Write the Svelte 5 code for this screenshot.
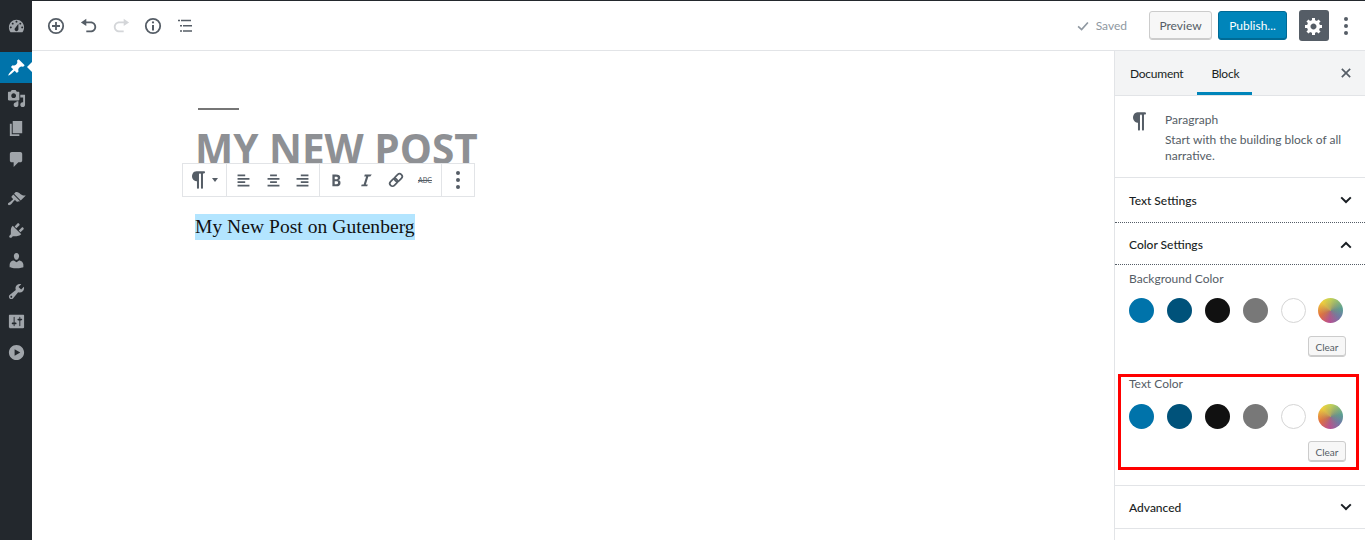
<script>
  const adminTop = [
    { d: 'M13 11V4c0-.55-.45-1-1-1h-1.67L9 1H5L3.67 3H2c-.55 0-1 .45-1 1v7c0 .55.45 1 1 1h10c.55 0 1-.45 1-1zM7 4.5c1.38 0 2.5 1.12 2.5 2.5S8.38 9.5 7 9.5 4.5 8.38 4.5 7 5.62 4.5 7 4.5zM14 6h5v10.5c0 1.38-1.12 2.5-2.5 2.5S14 17.88 14 16.5s1.12-2.5 2.5-2.5c.17 0 .34.02.5.05V9h-3V6zm-4 8.05V13h2v3.5c0 1.38-1.12 2.5-2.5 2.5S7 17.88 7 16.5 8.12 14 9.5 14c.17 0 .34.02.5.05z' },
    { d: 'M6 15V2h10v13H6zm-1 1h8v2H3V5h2v11z' },
    { d: 'M5 2h9c1.1 0 2 .9 2 2v7c0 1.1-.9 2-2 2h-2l-5 5v-5H5c-1.1 0-2-.9-2-2V4c0-1.1.9-2 2-2z' }
  ];
  const adminBottom = [
    { d: 'M14.48 11.06L7.41 3.99l1.5-1.5c.5-.56 2.3-.47 3.51.32 1.21.8 1.43 1.28 2.91 2.1 1.18.64 2.45 1.26 4.45.85zm-.71.71L6.7 4.7 4.93 6.47c-.39.39-.39 1.02 0 1.41l1.06 1.06c.39.39.39 1.03 0 1.42-.6.6-1.43 1.11-2.21 1.69-.35.26-.7.53-1.01.84C1.43 13.23.4 14.75 1.3 15.65c.9.9 2.42-.13 3.76-1.47.31-.31.58-.66.84-1.01.58-.78 1.09-1.61 1.69-2.21.39-.39 1.03-.39 1.42 0l1.06 1.06c.39.39 1.02.39 1.41 0z' },
    { d: 'M13.11 4.36L9.87 7.6 8 5.73l3.24-3.24c.35-.34 1.05-.2 1.56.32.52.51.66 1.21.31 1.55zm-8 1.77l.91-1.12 9.01 9.01-1.19.84c-.71.71-2.63 1.16-3.82 1.16H6.14L4.9 17.26c-.59.59-1.54.59-2.12 0-.59-.58-.59-1.53 0-2.12l1.24-1.24v-3.88c0-1.13.4-3.19 1.09-3.89zm7.26 3.97l3.24-3.24c.34-.35 1.04-.21 1.55.31.52.51.66 1.21.31 1.55l-3.24 3.25z' },
    { d: 'M10 9.25c-2.27 0-2.73-3.44-2.73-3.44C7 4.02 7.82 2 9.97 2c2.16 0 2.98 2.02 2.71 3.81 0 0-.41 3.44-2.68 3.44zm0 2.57L12.72 10c2.39 0 4.52 2.33 4.52 4.53v2.49s-3.65 1.13-7.24 1.13c-3.65 0-7.24-1.13-7.24-1.13v-2.49c0-2.25 1.94-4.48 4.47-4.48z' },
    { d: 'M16.68 9.77c-1.34 1.34-3.3 1.67-4.95.99l-5.41 6.52c-.99.99-2.59.99-3.58 0s-.99-2.59 0-3.57l6.52-5.42c-.68-1.65-.35-3.61.99-4.95 1.28-1.28 3.12-1.62 4.72-1.06l-2.89 2.89 2.82 2.82 2.86-2.87c.53 1.58.18 3.39-1.08 4.67zM3.81 16.21c.4.39 1.04.39 1.43 0 .4-.4.4-1.04 0-1.43-.39-.4-1.03-.4-1.43 0-.39.39-.39 1.03 0 1.43z' },
    { d: 'M18 16V4c0-.55-.45-1-1-1H3c-.55 0-1 .45-1 1v12c0 .55.45 1 1 1h14c.55 0 1-.45 1-1zM8 11h1c.55 0 1 .45 1 1s-.45 1-1 1H8v1.5c0 .28-.22.5-.5.5s-.5-.22-.5-.5V13H6c-.55 0-1-.45-1-1s.45-1 1-1h1V5.5c0-.28.22-.5.5-.5s.5.22.5.5V11zm5-2h-1c-.55 0-1-.45-1-1s.45-1 1-1h1V5.5c0-.28.22-.5.5-.5s.5.22.5.5V7h1c.55 0 1 .45 1 1s-.45 1-1 1h-1v5.5c0 .28-.22.5-.5.5s-.5-.22-.5-.5V9z' },
    { d: 'M10 2c4.42 0 8 3.58 8 8s-3.58 8-8 8-8-3.58-8-8 3.58-8 8-8zm-2 11.5l6-3.5-6-3.5v7z' }
  ];
  const paragraphIcon = 'M15 2H7.54c-.83 0-1.59.2-2.28.6-.7.41-1.25.96-1.65 1.65C3.2 4.94 3 5.7 3 6.52c0 .82.2 1.58.61 2.27.4.69.95 1.24 1.65 1.64.69.41 1.45.61 2.28.61h.43V17c0 .27.1.51.29.71.2.19.44.29.71.29.28 0 .51-.1.71-.29.2-.2.3-.44.3-.71V5c0-.27.09-.51.29-.71.2-.19.44-.29.71-.29s.51.1.71.29c.19.2.29.44.29.71v12c0 .27.1.51.3.71.2.19.43.29.7.29.28 0 .51-.1.71-.29.2-.2.29-.44.29-.71V4H15c.27 0 .5-.1.7-.3.2-.19.3-.43.3-.7s-.1-.51-.3-.71C15.5 2.1 15.27 2 15 2z';
  const swatches = ['#0073aa', '#00527a', '#111111', '#787878', '#ffffff', 'gradient'];
</script>

{#snippet chevron(up)}
  <svg class="chev" viewBox="0 0 12 8" width="12" height="8">
    <path d={up ? 'M1.2 6.6 6 2l4.8 4.6' : 'M1.2 1.4 6 6l4.8-4.6'} fill="none" stroke="#191e23" stroke-width="2" />
  </svg>
{/snippet}

{#snippet palette(label)}
  <div class="label">{label}</div>
  <div class="swatches">
    {#each swatches as c}
      <span class="swatch" class:white={c === '#ffffff'} class:gradient={c === 'gradient'} style={c === 'gradient' ? '' : `background:${c}`}></span>
    {/each}
  </div>
  <div class="clear-row"><button class="clear">Clear</button></div>
{/snippet}

<div class="page">
  <nav class="adminbar">
    <div class="item first">
      <svg viewBox="0 0 20 20" width="19" height="19"><path fill="#a0a5aa" d="M3.76 16h12.48c1.1-1.37 1.76-3.11 1.76-5 0-4.42-3.58-8-8-8s-8 3.58-8 8c0 1.89.66 3.63 1.76 5zM10 4c.55 0 1 .45 1 1s-.45 1-1 1-1-.45-1-1 .45-1 1-1zM6 6c.55 0 1 .45 1 1s-.45 1-1 1-1-.45-1-1 .45-1 1-1zm8 0c.55 0 1 .45 1 1s-.45 1-1 1-1-.45-1-1 .45-1 1-1zm-5.37 5.55L12 7v6c0 1.1-.9 2-2 2s-2-.9-2-2c0-.57.24-1.08.63-1.45zM4 10c.55 0 1 .45 1 1s-.45 1-1 1-1-.45-1-1 .45-1 1-1zm12 0c.55 0 1 .45 1 1s-.45 1-1 1-1-.45-1-1 .45-1 1-1z" /></svg>
    </div>
    <div class="item active">
      <svg viewBox="0 0 20 20" width="19" height="19"><path fill="#fff" d="M10.44 3.02l1.82-1.82 6.36 6.35-1.83 1.82c-1.05-.68-2.48-.57-3.41.36l-.75.75c-.92.93-1.04 2.35-.35 3.41l-1.83 1.82-2.41-2.41-2.8 2.79c-.42.42-3.38 2.71-3.8 2.29s1.86-3.39 2.28-3.81l2.79-2.79L4.1 9.36l1.83-1.82c1.05.69 2.48.57 3.4-.36l.75-.75c.93-.92 1.05-2.35.36-3.41z" /></svg>
      <span class="arrow"></span>
    </div>
    {#each adminTop as icon}
      <div class="item"><svg viewBox="0 0 20 20" width="19" height="19"><path fill="#a0a5aa" d={icon.d} /></svg></div>
    {/each}
    <div class="menu-gap"></div>
    {#each adminBottom as icon}
      <div class="item"><svg viewBox="0 0 20 20" width="19" height="19"><path fill="#a0a5aa" d={icon.d} /></svg></div>
    {/each}
  </nav>

  <div class="main">
    <header class="topbar">
      <div class="tools">
        <button class="tool" aria-label="Add block">
          <svg viewBox="0 0 18 18" width="18" height="18"><circle cx="9" cy="9" r="7.2" fill="none" stroke="#555d66" stroke-width="1.8" /><path d="M9 5v8M5 9h8" stroke="#555d66" stroke-width="1.8" /></svg>
        </button>
        <button class="tool" aria-label="Undo">
          <svg viewBox="0 0 20 20" width="18" height="18"><path fill="#555d66" d="M12 5H7V2L1 6l6 4V7h5c2.2 0 4 1.8 4 4s-1.8 4-4 4H7v2h5c3.3 0 6-2.7 6-6s-2.7-6-6-6z" /></svg>
        </button>
        <button class="tool" aria-label="Redo">
          <svg viewBox="0 0 20 20" width="18" height="18"><path fill="#d4d6d9" d="M8 5h5V2l6 4-6 4V7H8c-2.2 0-4 1.8-4 4s1.8 4 4 4h5v2H8c-3.3 0-6-2.7-6-6s2.7-6 6-6z" /></svg>
        </button>
        <button class="tool" aria-label="Info">
          <svg viewBox="0 0 18 18" width="18" height="18"><circle cx="9" cy="9" r="7.2" fill="none" stroke="#555d66" stroke-width="1.8" /><path d="M9 8v5.5" stroke="#555d66" stroke-width="2" /><circle cx="9" cy="5.4" r="1.1" fill="#555d66" /></svg>
        </button>
        <button class="tool" aria-label="Outline">
          <svg viewBox="0 0 18 18" width="18" height="18"><path d="M1 3.5h2M4 3.5h10M3 8.8h2M6 8.8h9M3 14h2M6 14h9" stroke="#555d66" stroke-width="1.4" /></svg>
        </button>
      </div>
      <div class="actions">
        <span class="saved">
          <svg viewBox="0 0 20 20" width="14" height="14"><path d="M3 10.5 8 15l9-10" fill="none" stroke="#8f98a1" stroke-width="2.4" /></svg>
          Saved
        </span>
        <button class="btn preview">Preview</button>
        <button class="btn publish">Publish...</button>
        <button class="gear" aria-label="Settings">
          <svg viewBox="0 0 20 20" width="20" height="20"><path fill="#fff" fill-rule="evenodd" d="M18 12h-2.18c-.17.7-.44 1.35-.81 1.93l1.54 1.54-2.1 2.1-1.54-1.54c-.58.36-1.23.63-1.91.79V19H8v-2.18c-.68-.16-1.33-.43-1.91-.79l-1.54 1.54-2.12-2.12 1.54-1.54c-.36-.58-.63-1.23-.79-1.91H1V9.03h2.17c.16-.7.44-1.35.8-1.94L2.43 5.55l2.1-2.1 1.54 1.54c.58-.37 1.24-.64 1.93-.81V2h3v2.18c.68.16 1.33.43 1.91.79l1.54-1.54 2.12 2.12-1.54 1.54c.36.59.64 1.24.8 1.94H18V12zm-8.5 1.5c1.66 0 3-1.34 3-3s-1.34-3-3-3-3 1.34-3 3 1.34 3 3 3z" /></svg>
        </button>
        <span class="kebab top"><i></i><i></i><i></i></span>
      </div>
    </header>

    <div class="workspace">
      <main class="editor">
        <div class="rule"></div>
        <h1 class="title">MY NEW POST</h1>
        <div class="block-toolbar">
          <div class="group g1">
            <svg viewBox="0 0 20 20" width="20" height="22" preserveAspectRatio="none"><path fill="#555d66" d={paragraphIcon} /></svg>
            <span class="caret"></span>
          </div>
          <div class="group g2">
            <svg viewBox="0 0 20 20" width="17" height="17"><path fill="#555d66" d="M12 5V3H3v2h9zm5 4V7H3v2h14zm-5 4v-2H3v2h9zm5 4v-2H3v2h14z" /></svg>
            <svg viewBox="0 0 20 20" width="17" height="17"><path fill="#555d66" d="M14 5V3H6v2h8zm3 4V7H3v2h14zm-3 4v-2H6v2h8zm3 4v-2H3v2h14z" /></svg>
            <svg viewBox="0 0 20 20" width="17" height="17"><path fill="#555d66" d="M17 5V3H8v2h9zm0 4V7H3v2h14zm0 4v-2H8v2h9zm0 4v-2H3v2h14z" /></svg>
          </div>
          <div class="group g3">
            <svg viewBox="0 0 20 20" width="18" height="18"><path fill="#555d66" fill-rule="evenodd" d="M6 4v13h4.54c1.37 0 2.46-.33 3.26-1 .8-.66 1.2-1.58 1.2-2.77 0-.84-.17-1.51-.51-2.01s-.9-.85-1.67-1.03v-.09c.57-.1 1.02-.4 1.36-.9s.51-1.13.51-1.91c0-1.14-.39-1.98-1.17-2.5C12.75 4.26 11.5 4 9.78 4H6zm2.57 5.15V6.26h1.36c.73 0 1.27.11 1.61.32.34.22.51.58.51 1.07 0 .54-.16.92-.47 1.15s-.82.35-1.51.35h-1.5zm0 2.19h1.6c1.44 0 2.16.53 2.16 1.61 0 .6-.17 1.05-.51 1.34s-.86.43-1.57.43H8.57v-3.38z" /></svg>
            <svg viewBox="0 0 20 20" width="18" height="18"><path fill="#555d66" d="M14.78 6h-2.13l-2.8 9h2.12l-.62 2H4.6l.62-2h2.14l2.8-9H8.03l.62-2h7.75z" /></svg>
            <svg viewBox="0 0 20 20" width="18" height="18"><g transform="rotate(-45 10 10)" fill="none" stroke="#555d66" stroke-width="1.9"><rect x="1.5" y="7" width="9.5" height="6" rx="3" /><rect x="9" y="7" width="9.5" height="6" rx="3" /></g></svg>
            <span class="abc">ABC</span>
          </div>
          <div class="group g4"><span class="kebab"><i></i><i></i><i></i></span></div>
        </div>
        <p class="body-text"><span>My New Post on Gutenberg</span></p>
      </main>

      <aside class="sidebar">
        <div class="tabs">
          <span class="tab">Document</span>
          <span class="tab on">Block</span>
          <svg class="close" viewBox="0 0 12 12" width="10" height="10"><path d="M1 1l10 10M11 1 1 11" stroke="#555d66" stroke-width="2" /></svg>
        </div>
        <div class="card">
          <svg viewBox="0 0 20 20" width="20" height="23" preserveAspectRatio="none"><path fill="#555d66" d={paragraphIcon} /></svg>
          <div>
            <div class="card-title">Paragraph</div>
            <div class="card-desc">Start with the building block of all narrative.</div>
          </div>
        </div>
        <div class="panel solid">Text Settings {@render chevron(false)}</div>
        <div class="panel dotted">Color Settings {@render chevron(true)}</div>
        <div class="colors">
          {@render palette('Background Color')}
          <div class="highlight">
            {@render palette('Text Color')}
          </div>
        </div>
        <div class="panel solid adv">Advanced {@render chevron(false)}</div>
      </aside>
    </div>
  </div>
</div>

<style>
  :global(body) {
    margin: 0;
    background: #fff;
  }

  .page {
    display: flex;
    width: 1365px;
    height: 540px;
    overflow: hidden;
    font-family: Lato, 'Open Sans', sans-serif;
    color: #191e23;
  }

  button {
    font-family: inherit;
    cursor: pointer;
  }

  .adminbar {
    width: 32px;
    flex: none;
    background: #23282d;
    padding-top: 11px;
    box-sizing: border-box;
  }

  .item {
    position: relative;
    height: 30.5px;
    display: flex;
    align-items: center;
    justify-content: center;
  }

  .item.first { margin-bottom: 10.5px; }
  .item.active { background: #0073aa; height: 31px; }
  .menu-gap { height: 10px; }

  .arrow {
    position: absolute;
    right: 0;
    top: 10px;
    border: 5px solid transparent;
    border-right-color: #fff;
    border-left-width: 0;
  }

  .main {
    flex: 1;
    min-width: 0;
    display: flex;
    flex-direction: column;
    border-top: 1px solid #23282d;
  }

  .topbar {
    height: 49px;
    flex: none;
    display: flex;
    align-items: center;
    justify-content: space-between;
    background: #fff;
    border-bottom: 1px solid #e2e4e7;
  }

  .tools {
    display: flex;
    padding-left: 8px;
  }

  .tool {
    width: 32.4px;
    height: 36px;
    padding: 0;
    border: 0;
    background: none;
    display: flex;
    align-items: center;
    justify-content: center;
  }

  .actions {
    display: flex;
    align-items: center;
  }

  .saved {
    display: flex;
    align-items: center;
    gap: 6px;
    font-size: 12px;
    color: #8f98a1;
    margin-right: 22px;
  }

  .btn {
    height: 29px;
    padding: 0;
    border-radius: 3px;
    font-size: 12px;
    box-sizing: border-box;
  }

  .preview {
    width: 63px;
    margin-right: 6px;
    color: #555d66;
    background: #f7f7f7;
    border: 1px solid #ccc;
    box-shadow: inset 0 -1px 0 #ccc;
  }

  .publish {
    width: 69px;
    margin-right: 12px;
    color: #fff;
    background: #0085ba;
    border: 1px solid #006a95;
    box-shadow: inset 0 -1px 0 #006a95;
  }

  .gear {
    width: 30px;
    height: 31px;
    padding: 0;
    border: 0;
    border-radius: 3px;
    background: #555d66;
    display: flex;
    align-items: center;
    justify-content: center;
    margin-right: 15px;
  }

  .kebab {
    display: flex;
    flex-direction: column;
    align-items: center;
    gap: 3px;
    width: 4px;
  }

  .kebab i {
    width: 4px;
    height: 4px;
    border-radius: 50%;
    background: #555d66;
  }

  .kebab.top { margin-right: 17px; }

  .workspace {
    flex: 1;
    display: flex;
    min-height: 0;
  }

  .editor {
    position: relative;
    flex: 1;
    padding: 57px 0 0 164px;
    min-width: 0;
  }

  .rule {
    width: 41px;
    height: 2px;
    background: #767676;
    margin-left: 2px;
  }

  .title {
    margin: 12px 0 0 -1px;
    font-family: 'Open Sans', sans-serif;
    font-size: 40.5px;
    line-height: 54px;
    font-weight: 700;
    color: #8e9094;
    height: 40px;
    white-space: nowrap;
  }

  .block-toolbar {
    position: absolute;
    left: 150px;
    top: 112px;
    height: 34px;
    display: flex;
    background: #fff;
    border: 1px solid #e2e4e7;
    box-sizing: border-box;
  }

  .group {
    display: flex;
    align-items: center;
    border-right: 1px solid #e2e4e7;
    box-sizing: border-box;
  }

  .group:last-child { border-right: 0; }

  .g1 { width: 44px; padding-left: 6px; gap: 3px; }
  .g2 { width: 93px; padding-left: 8px; gap: 12.5px; }
  .g3 { width: 122px; padding-left: 7px; gap: 12px; }
  .g4 { flex: 1; width: 32px; justify-content: center; }

  .caret {
    border: 3.5px solid transparent;
    border-top: 4px solid #555d66;
    border-bottom: 0;
  }

  .abc {
    font-size: 7px;
    font-weight: 400;
    color: #555d66;
    text-decoration: line-through;
    margin-left: 1px;
  }

  .body-text {
    margin: 0;
    position: absolute;
    left: 163px;
    top: 164px;
    font-family: 'Liberation Serif', serif;
    font-size: 19.5px;
    line-height: 24px;
    letter-spacing: 0.05px;
    color: #111;
    white-space: nowrap;
  }

  .body-text span {
    background: #b3e5ff;
    padding: 2px 0 3px;
  }

  .sidebar {
    width: 251px;
    flex: none;
    border-left: 1px solid #e2e4e7;
    background: #fff;
    box-sizing: border-box;
  }

  .tabs {
    position: relative;
    height: 45px;
    display: flex;
    align-items: center;
    background: #f3f4f5;
    border-bottom: 1px solid #e2e4e7;
    box-sizing: border-box;
    padding-left: 15px;
    font-size: 12px;
    letter-spacing: -0.25px;
  }

  .tab {
    position: relative;
    margin-right: 28px;
    color: #191e23;
  }

  .tab.on::after {
    content: '';
    position: absolute;
    left: -14px;
    right: -13px;
    bottom: -14px;
    height: 3px;
    background: #0085ba;
  }

  .close {
    position: absolute;
    right: 14px;
    top: 17px;
  }

  .card {
    height: 82px;
    display: flex;
    gap: 15px;
    padding: 15px 0 0 15px;
    border-bottom: 1px solid #e2e4e7;
    box-sizing: border-box;
    color: #555d66;
    font-size: 12px;
  }

  .card svg { flex: none; margin-top: -1px; }
  .card-title { line-height: 18px; margin-bottom: 3px; }
  .card-desc { line-height: 16px; width: 190px; }

  .panel {
    display: flex;
    align-items: center;
    justify-content: space-between;
    padding: 0 13px 0 14px;
    font-size: 12px;
    font-weight: 500;
    box-sizing: border-box;
    color: #191e23;
  }

  .panel.solid { height: 44px; }
  .panel.dotted {
    height: 43px;
    padding-top: 2px;
    border-top: 1px dotted #555d66;
    border-bottom: 1px dotted #555d66;
  }

  .panel.adv {
    height: 44px;
    border-top: 1px solid #e2e4e7;
    border-bottom: 1px solid #e2e4e7;
    margin-top: 15px;
  }

  .colors {
    padding: 6px 0 0;
  }

  .colors > .label,
  .colors > .swatches,
  .colors > .clear-row {
    margin-left: 14px;
  }

  .label {
    font-size: 12px;
    line-height: 16px;
    color: #555d66;
    margin-bottom: 11px;
  }

  .swatches {
    display: flex;
    gap: 12.9px;
    height: 25px;
  }

  .swatch {
    width: 25px;
    height: 25px;
    border-radius: 50%;
    box-sizing: border-box;
    flex: none;
  }

  .swatch.white { border: 1px solid #d5d5d5; }
  .swatch.gradient {
    background:
      radial-gradient(circle, rgba(150, 120, 115, 0.55), rgba(150, 120, 115, 0) 65%),
      conic-gradient(from 0deg, #c4d255, #5a9f93 80deg, #6f7aa6 125deg, #b84f92 185deg, #e2703f 245deg, #efcf3c 315deg, #c4d255);
  }

  .clear-row {
    display: flex;
    justify-content: flex-end;
    padding-right: 19px;
    margin-top: 13px;
  }

  .clear {
    width: 38px;
    height: 21px;
    padding: 0;
    font-size: 10px;
    color: #555d66;
    background: #f7f7f7;
    border: 1px solid #ccc;
    border-radius: 3px;
    box-shadow: inset 0 -1px 0 #ccc;
  }

  .highlight {
    position: relative;
    margin: 17px 6px 0 3px;
    padding: 0 0 8px 8px;
    height: 96px;
    box-sizing: border-box;
    border: 3px solid #f00;
  }

  .highlight .label {
    margin-top: -1px;
    margin-bottom: 12px;
  }

  .highlight .clear-row {
    padding-right: 10px;
    margin-top: 12px;
  }
</style>
